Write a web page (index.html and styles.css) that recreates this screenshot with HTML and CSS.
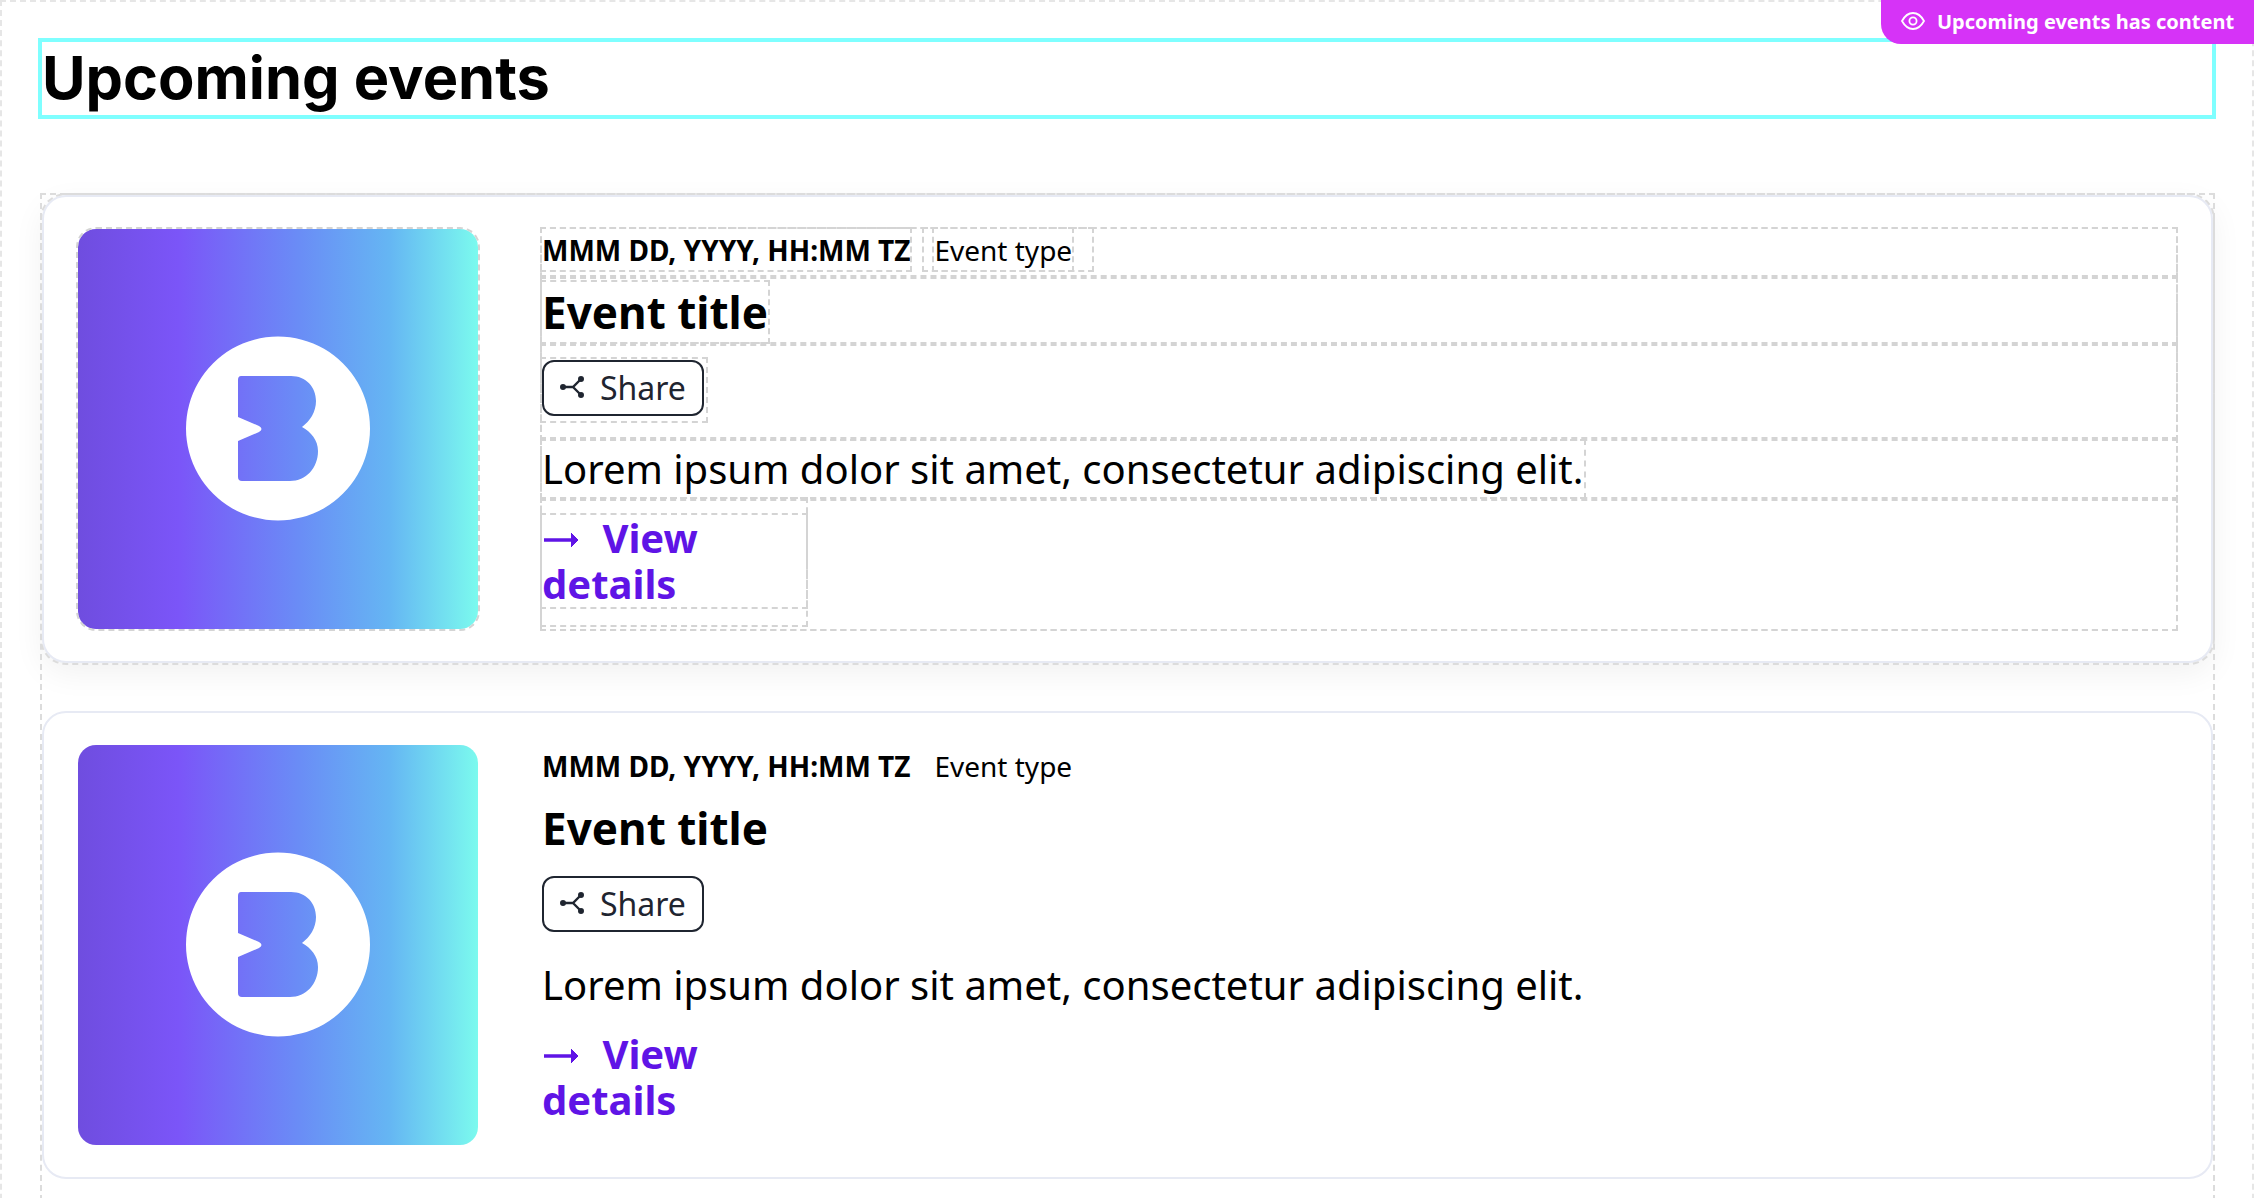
FILE: index.html
```html
<!DOCTYPE html>
<html lang="en">
<head>
    <meta charset="UTF-8">
    <meta name="viewport" content="width=device-width, initial-scale=1.0">
    <title>Upcoming events</title>
    <link rel="stylesheet" href="styles.css">
</head>
<body>
    <div class="section">
        <div class="badge">
            <svg class="badge-icon" viewBox="0 0 24 18" fill="none" stroke="#fff" stroke-width="1.8">
                <path d="M1 9C4 3.500 8 1 12 1s8 2.500 11 8c-3 5.500-7 8-11 8S4 14.500 1 9Z"/>
                <circle cx="12" cy="9" r="3.600"/>
            </svg>
            Upcoming events has content
        </div>
        <div class="heading-box">
            <h1>Upcoming events</h1>
        </div>

        <div class="event-list">
            <div class="card card-active">
                <div class="thumb box">
                    <svg viewBox="0 0 400 400" width="400" height="400">
                        <path fill="#fff" fill-rule="evenodd" d="M200 107.500a92 92 0 1 0 0.010 0ZM163 147H213C228 147 238 158 238 172C238 183 232 192 224 198C233 203 240 211 240 222C240 239 228 252 212 252H164Q160 252 160 248V212L181 203Q186 200 181 197L160 188V151Q160 147 163 147Z"/>
                    </svg>
                </div>
                <div class="content box">
                    <div class="meta box">
                        <span class="date box">MMM DD, YYYY, HH:MM TZ</span>
                        <span class="type-wrap box"><span class="type box">Event type</span></span>
                    </div>
                    <div class="title-row box"><h3 class="title box">Event title</h3></div>
                    <div class="share-row box">
                        <div class="share-wrap box">
                            <button class="share">
                                <svg viewBox="0 0 24 22" width="24" height="22" fill="#1f2530" stroke="#1f2530" stroke-width="2.400">
                                    <path d="M3 11H13L21 3M13 11L21 19" fill="none"/>
                                    <circle cx="3" cy="11" r="1.800"/><circle cx="21" cy="3" r="1.800"/><circle cx="21" cy="19" r="1.800"/>
                                </svg>
                                Share
                            </button>
                        </div>
                    </div>
                    <div class="text-row box"><span class="text box">Lorem ipsum dolor sit amet, consectetur adipiscing elit.</span></div>
                    <div class="link-row box">
                        <div class="link-wrap box">
                            <a class="link box" href="#">
                                <svg class="arrow" viewBox="0 0 36 20" width="36" height="20" fill="none" stroke="#5f14e6" stroke-width="3.500">
                                    <path d="M0 10H33"/><path d="M27 3l7 7-7 7" fill="#5f14e6" stroke-width="1"/>
                                </svg>
                                View details
                            </a>
                        </div>
                    </div>
                </div>
            </div>

            <div class="card">
                <div class="thumb">
                    <svg viewBox="0 0 400 400" width="400" height="400">
                        <path fill="#fff" fill-rule="evenodd" d="M200 107.500a92 92 0 1 0 0.010 0ZM163 147H213C228 147 238 158 238 172C238 183 232 192 224 198C233 203 240 211 240 222C240 239 228 252 212 252H164Q160 252 160 248V212L181 203Q186 200 181 197L160 188V151Q160 147 163 147Z"/>
                    </svg>
                </div>
                <div class="content">
                    <div class="meta">
                        <span class="date">MMM DD, YYYY, HH:MM TZ</span>
                        <span class="type-wrap"><span class="type">Event type</span></span>
                    </div>
                    <div class="title-row"><h3 class="title">Event title</h3></div>
                    <div class="share-row">
                        <div class="share-wrap">
                            <button class="share">
                                <svg viewBox="0 0 24 22" width="24" height="22" fill="#1f2530" stroke="#1f2530" stroke-width="2.400">
                                    <path d="M3 11H13L21 3M13 11L21 19" fill="none"/>
                                    <circle cx="3" cy="11" r="1.800"/><circle cx="21" cy="3" r="1.800"/><circle cx="21" cy="19" r="1.800"/>
                                </svg>
                                Share
                            </button>
                        </div>
                    </div>
                    <div class="text-row"><span class="text">Lorem ipsum dolor sit amet, consectetur adipiscing elit.</span></div>
                    <div class="link-row">
                        <div class="link-wrap">
                            <a class="link" href="#">
                                <svg class="arrow" viewBox="0 0 36 20" width="36" height="20" fill="none" stroke="#5f14e6" stroke-width="3.500">
                                    <path d="M0 10H33"/><path d="M27 3l7 7-7 7" fill="#5f14e6" stroke-width="1"/>
                                </svg>
                                View details
                            </a>
                        </div>
                    </div>
                </div>
            </div>
        </div>
    </div>
</body>
</html>
```

FILE: styles.css
```css
html, body {
    margin: 0;
    height: 1198px;
    overflow: hidden;
    background-color: white;
}
body {
    font-family: "Noto Sans", "Open Sans", sans-serif;
    color: black;
}
.section {
    position: relative;
    box-sizing: border-box;
    width: 2254px;
    height: 1240px;
    padding: 38px 38px 0 38px;
    border: 2px dashed #e6e6e6;
    border-bottom: none;
}
.badge {
    position: absolute;
    top: -2px;
    right: -2px;
    box-sizing: border-box;
    width: 373px;
    height: 44px;
    display: flex;
    align-items: center;
    gap: 12px;
    padding-left: 20px;
    padding-bottom: 2px;
    background-color: #d633f7;
    border-bottom-left-radius: 20px;
    color: white;
    font-size: 20px;
    font-weight: 700;
}
.badge-icon {
    width: 24px;
    height: 18px;
}
.heading-box {
    box-sizing: border-box;
    width: 2178px;
    height: 81px;
    margin-top: -2px;
    margin-left: -2px;
    border: 4px solid #7fffff;
}
h1 {
    margin: 0;
    font-family: Inter, "Liberation Sans", sans-serif;
    font-size: 59.500px;
    font-weight: 700;
    line-height: 71px;
}
.event-list {
    width: 2171px;
    margin-top: 76px;
    margin-left: 2px;
    padding-bottom: 60px;
    outline: 2px dashed #dcdcdc;
    display: flex;
    flex-direction: column;
    gap: 48px;
}
.card {
    box-sizing: border-box;
    height: 468px;
    display: flex;
    gap: 64px;
    padding: 32px 35px 32px 34px;
    background-color: white;
    border: 2px solid #e7eaf4;
    border-radius: 24px;
}
.card-active {
    box-shadow: 0 10px 32px rgba(0, 0, 0, 0.06);
    outline: 2px dashed #dcdcdc;
}
.box {
    outline: 2px dashed #d4d4d4;
}
.thumb {
    flex: none;
    width: 400px;
    height: 400px;
    border-radius: 18px;
    background: linear-gradient(90deg, #6f4ddf 0%, #7b55f8 25%, #6a8cf6 55%, #65b6f3 78%, #7bfaee 100%);
}
.thumb svg {
    display: block;
}
.content {
    flex: 1;
    height: 400px;
}
.meta {
    height: 48px;
    display: flex;
    gap: 14px;
    font-size: 28px;
    line-height: 42px;
}
.date {
    font-weight: 700;
    height: 41px;
}
.type-wrap {
    height: 41px;
    padding: 0 20px 0 10px;
}
.type {
    display: block;
    height: 41px;
}
.title-row {
    box-sizing: border-box;
    height: 67px;
    padding-top: 5px;
}
.title {
    display: inline-block;
    margin: 0;
    font-size: 44px;
    font-weight: 700;
    line-height: 60px;
}
.share-row {
    height: 95px;
    padding-top: 15px;
    box-sizing: border-box;
}
.share-wrap {
    display: inline-block;
    padding: 1px 2px 5px 0;
}
.share {
    box-sizing: border-box;
    display: flex;
    align-items: center;
    gap: 16px;
    width: 162px;
    height: 56px;
    padding: 0 0 2px 16px;
    background-color: white;
    border: 2px solid #1f2530;
    border-radius: 12px;
    color: #1f2530;
    font-family: inherit;
    font-size: 32px;
}
.text-row {
    box-sizing: border-box;
    height: 60px;
    padding-top: 2px;
    font-size: 40px;
    line-height: 56px;
}
.text {
    display: inline-block;
    height: 56px;
}
.link-row {
    height: 130px;
}
.link-wrap {
    box-sizing: border-box;
    width: 264px;
    height: 126px;
    padding-top: 16px;
}
.link {
    display: block;
    height: 92px;
    color: #5f14e6;
    font-size: 40px;
    font-weight: 700;
    line-height: 46px;
    text-decoration: none;
}
.arrow {
    margin-left: 2px;
    margin-right: 12px;
    position: relative;
    top: -3px;
}
```
